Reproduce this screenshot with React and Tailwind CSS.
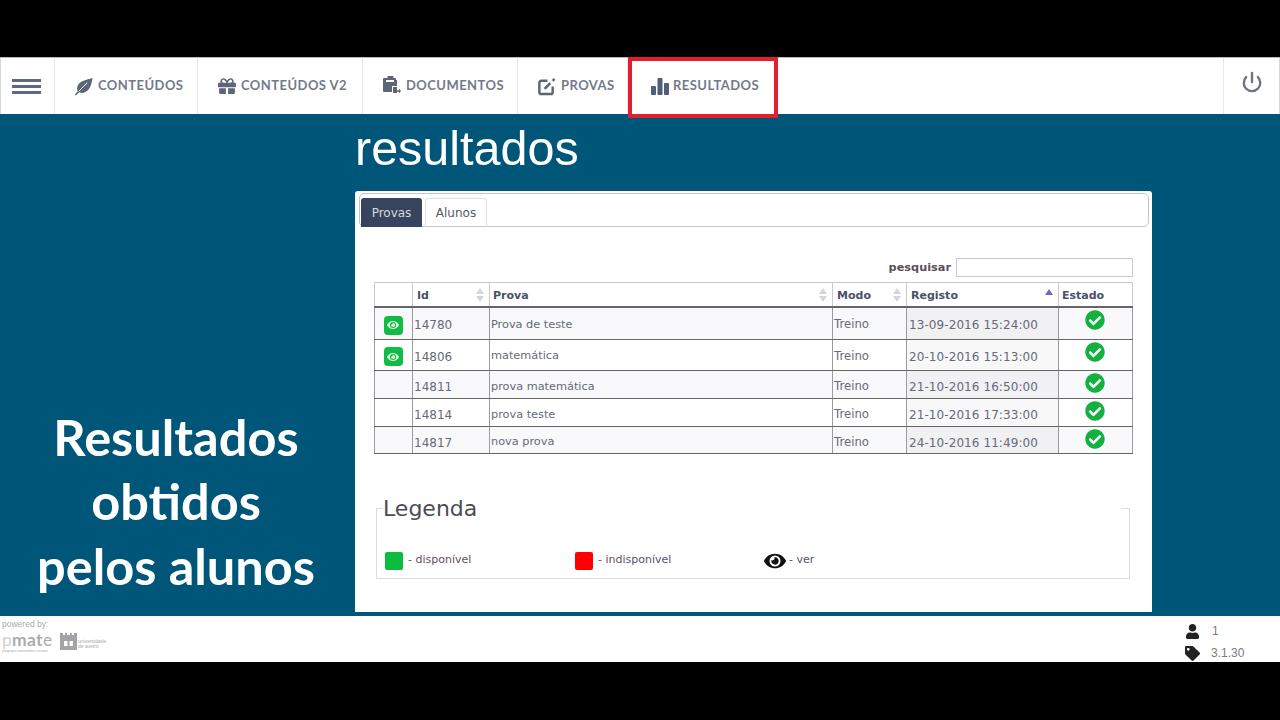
import React from "react";
import { FaGift, FaUser, FaTag, FaEye, FaCheckCircle } from "react-icons/fa";
import { Power } from "lucide-react";

function LeafIcon() {
  return (
    <svg width="19" height="19" viewBox="0 0 20 20">
      <path fill="#5d6678" d="M19.5 1c-1 7-3 13-8 15-2 1-4 1-6 0l-3.5 3.5-1.2-1.2L4 15c-1-2-1-4 0-6 2-5 9-6 15.5-8z" />
      <path d="M5 15L14 6" stroke="#fff" strokeWidth="1" />
    </svg>
  );
}

function EditIcon() {
  return (
    <svg width="19" height="19" viewBox="0 0 20 20" fill="none" stroke="#5d6678">
      <path d="M11 4H4.5a2 2 0 0 0-2 2v10a2 2 0 0 0 2 2h10a2 2 0 0 0 2-2v-6" strokeWidth="2.6" />
      <path d="M8 12.5L14 6.5" strokeWidth="2.8" />
      <path d="M16.5 4L18.5 2" strokeWidth="2.6" />
    </svg>
  );
}

function ClipIcon() {
  return (
    <svg width="18" height="20" viewBox="0 0 18 20" fill="#5d6678">
      <path d="M6 0h3a1 1 0 0 1 1 2h2a1 1 0 0 1 1 1v1h1v6h-5v6H1a1 1 0 0 1-1-1V3a1 1 0 0 1 1-1h4a1 1 0 0 1 1-2zM3 4v2h8V4z" fillRule="evenodd" />
      <rect x="10" y="11" width="4" height="6" />
      <path d="M11 14.2h5V12.5l2 2.5-2 2.5v-1.7h-5z" />
    </svg>
  );
}

function BarsIcon() {
  return (
    <svg width="18" height="18" viewBox="0 0 18 18" fill="#4f5f7a">
      <rect x="0" y="9" width="5" height="9" rx="1" />
      <rect x="6.5" y="1" width="5" height="17" rx="1" />
      <rect x="13" y="6" width="5" height="12" rx="1" />
    </svg>
  );
}

function NavItem({ w, icon, label }) {
  return (
    <div className={`${w} flex h-full items-center gap-[5px] border-r border-[#e6e8ee] pl-[19px]`}>
      <span className="flex w-[19px] justify-center">{icon}</span>
      <span className="text-[13px] font-bold tracking-[0.45px] text-[#737a8a]">{label}</span>
    </div>
  );
}

function SortArrows() {
  return (
    <svg width="8" height="14" viewBox="0 0 8 14" fill="#d4d6dc">
      <path d="M4 0l4 6H0z" />
      <path d="M4 14L0 8h8z" />
    </svg>
  );
}

function Th({ children, arrows, up, pl = "pl-[4px]" }) {
  return (
    <th className="border border-[#c9c9cf] border-b-[2px] border-b-[#666] p-0 text-left text-[11px] font-bold text-[#4a5068]">
      <div className={`flex h-[23px] items-center justify-between pr-[5px] ${pl}`}>
        <span className="pt-[3px]">{children}</span>
        {arrows && <SortArrows />}
        {up && (
          <span className="mb-[6px] block">
            <svg width="8" height="6" viewBox="0 0 8 6" fill="#6a6ac4" className="block">
              <path d="M4 0l4 6H0z" />
            </svg>
          </span>
        )}
      </div>
    </th>
  );
}

const rows = [
  { id: "14780", prova: "Prova de teste", data: "13-09-2016 15:24:00", h: "h-[32px]", eye: true, odd: true, pt: "pt-[4px]" },
  { id: "14806", prova: "matemática", data: "20-10-2016 15:13:00", h: "h-[31px]", eye: true, odd: false, pt: "pt-[4px]" },
  { id: "14811", prova: "prova matemática", data: "21-10-2016 16:50:00", h: "h-[28px]", eye: false, odd: true, pt: "pt-[6px]" },
  { id: "14814", prova: "prova teste", data: "21-10-2016 17:33:00", h: "h-[28px]", eye: false, odd: false, pt: "pt-[6px]" },
  { id: "14817", prova: "nova prova", data: "24-10-2016 11:49:00", h: "h-[27px]", eye: false, odd: true, pt: "pt-[6px]" },
];

const td = "border-x border-x-[#9a9aa0] border-y-[1.5px] border-y-[#666] p-0 align-middle";

export default function App() {
  return (
    <div className="flex h-[720px] w-[1280px] flex-col overflow-hidden bg-black pt-[57px] font-['Liberation_Sans',sans-serif]">
      <div className="flex h-[605px] flex-col">
        <nav className="flex h-[57px] shrink-0 items-center border-x border-x-[#d8d8d8] border-t border-t-[#bbb] bg-white font-['Lato',sans-serif]">
          <div className="flex h-full w-[54px] flex-col items-center justify-center gap-[3px] border-r border-[#e6e8ee] pr-[2px]">
            <span className="block h-[3px] w-[29px] bg-[#5d6a82]" />
            <span className="block h-[3px] w-[29px] bg-[#5d6a82]" />
            <span className="block h-[3px] w-[29px] bg-[#5d6a82]" />
          </div>
          <NavItem w="w-[143px]" icon={<LeafIcon />} label="CONTEÚDOS" />
          <NavItem w="w-[165px]" icon={<FaGift size={18} color="#5d6678" />} label="CONTEÚDOS V2" />
          <NavItem w="w-[155px]" icon={<ClipIcon />} label="DOCUMENTOS" />
          <NavItem w="w-[110px]" icon={<EditIcon />} label="PROVAS" />
          <div className="relative h-full w-[150px]">
            <div className="flex h-full items-center gap-[4px] pl-[23px]">
              <BarsIcon />
              <span className="text-[13px] font-bold tracking-[0.45px] text-[#737a8a]">RESULTADOS</span>
            </div>
            <span className="absolute -bottom-[4px] left-0 right-0 top-[-1px] border-[4px] border-[#e01f2f]" />
          </div>
          <div className="ml-auto flex h-full w-[56px] justify-center border-l border-[#e6e8ee] pt-[13px]">
            <Power size={22} color="#6e7482" strokeWidth={2.6} />
          </div>
        </nav>

        <main className="flex min-h-0 flex-1 bg-[#005679]">
          <div className="flex w-[355px] flex-col justify-end pb-[18px] pr-[3px] text-center font-['Lato',sans-serif] text-[50.5px] font-bold leading-[64.5px] text-white">
            <div>Resultados</div>
            <div>obtidos</div>
            <div>pelos alunos</div>
          </div>

          <div className="flex w-[797px] flex-col">
            <h1 className="h-[77px] pt-[4px] text-[48.5px] font-normal leading-[60px] text-white">resultados</h1>
            <section className="h-[421px] rounded-t-[3px] bg-white font-['DejaVu_Sans',sans-serif] text-[12px]">
              <div className="ml-[4px] mr-[3px] mt-[2px] flex h-[34px] items-end gap-[3px] rounded-[5px] border border-[#c6c6c6] pl-[1px]">
                <div className="-mb-px flex h-[29px] w-[61px] items-center justify-center rounded-t-[3px] bg-[#36455d] text-[#d5d9e0]">Provas</div>
                <div className="-mb-px flex h-[29px] w-[62px] items-center justify-center rounded-t-[3px] border border-b-0 border-[#e2e2e2] text-[#555a66]">Alunos</div>
              </div>

              <div className="mt-[31px] flex h-[19px] items-center justify-end gap-[5px] pr-[19px]">
                <label className="pt-[1px] text-[11.3px] font-bold text-[#5c5058]">pesquisar</label>
                <input aria-label="pesquisar" className="h-[19px] w-[177px] border border-[#c9c9c9] bg-white" />
              </div>

              <div className="ml-[19px] mt-[5px] w-[758px]">
                <table className="w-full table-fixed border-collapse text-[#666a78]">
                  <colgroup>
                    <col className="w-[38px]" />
                    <col className="w-[77px]" />
                    <col className="w-[343px]" />
                    <col className="w-[74px]" />
                    <col className="w-[152px]" />
                    <col className="w-[74px]" />
                  </colgroup>
                  <thead>
                    <tr>
                      <Th />
                      <Th arrows>Id</Th>
                      <Th arrows pl="pl-[3px]">Prova</Th>
                      <Th arrows>Modo</Th>
                      <Th up>Registo</Th>
                      <Th pl="pl-[3px]">Estado</Th>
                    </tr>
                  </thead>
                  <tbody>
                    {rows.map((r) => (
                      <tr key={r.id} className={`${r.h} ${r.odd ? "bg-[#f9f8fb]" : "bg-white"}`}>
                        <td className={`${td} pr-[1px] pt-[4px]`}>
                          {r.eye && (
                            <div className="flex justify-center">
                              <span className="flex h-[19px] w-[19px] items-center justify-center rounded-[4px] bg-[#12bb45]">
                                <FaEye size={12} color="#d8f2de" />
                              </span>
                            </div>
                          )}
                        </td>
                        <td className={`${td} pl-[1px] ${r.pt}`}>{r.id}</td>
                        <td className={`${td} pl-[1px] ${r.pt} text-[11.3px]`}>{r.prova}</td>
                        <td className={`${td} pl-[1px] ${r.pt} text-[11.7px]`}>Treino</td>
                        <td className={`${td} pl-[2px] ${r.pt} tracking-[0.08px] ${r.odd ? "bg-[#f1f0f3]" : "bg-[#f8f8f9]"}`}>{r.data}</td>
                        <td className={`${td} pr-[1px] pt-[2px] align-top`}>
                          <div className="flex justify-center">
                            <FaCheckCircle size={20} color="#12b03f" />
                          </div>
                        </td>
                      </tr>
                    ))}
                  </tbody>
                </table>
              </div>

              <fieldset className="ml-[21px] mt-[41px] h-[84px] w-[753px] border-[1.5px] border-[#dcdcdc] px-[8px]">
                <legend className="-ml-[2px] w-[738px] bg-white p-0 pt-[1px] text-[22px] leading-[26px] text-[#4d4b52]">Legenda</legend>
                <div className="mt-[28px] flex items-center text-[11px] text-[#5f5068]">
                  <div className="flex w-[190px] items-center gap-[5px]">
                    <span className="block h-[18px] w-[18px] rounded-[2px] bg-[#0bbd3f]" />
                    <span>- disponível</span>
                  </div>
                  <div className="flex w-[189px] items-center gap-[5px]">
                    <span className="block h-[18px] w-[18px] rounded-[2px] bg-[#ff0000]" />
                    <span>- indisponível</span>
                  </div>
                  <div className="flex items-center gap-[3px]">
                    <FaEye size={22} color="#111" />
                    <span>- ver</span>
                  </div>
                </div>
              </fieldset>
            </section>
          </div>
        </main>

        <footer className="flex h-[46px] shrink-0 items-stretch justify-between bg-white">
          <div className="pl-[2px] pt-[3px] text-[#a9abaf]">
            <div className="text-[8.5px] leading-[10px]">powered by:</div>
            <div className="mt-[2px] flex items-start gap-[8px]">
              <div className="w-[50px]">
                <div className="font-['Lato',sans-serif] text-[17.5px] font-bold leading-[18px] tracking-[0.3px]">
                  <span className="font-normal text-[#cfd0d3]">p</span>mat<span className="font-normal">e</span>
                </div>
                <div className="text-[3.5px] leading-[5px]">programa matemática ensino</div>
              </div>
              <svg width="17" height="17" viewBox="0 0 17 17" fill="#a2a4a8" className="mt-[2px]">
                <path d="M0 0h3v2h2V0h2v2h3V0h2v2h2V0h3v17H0zM4 8v5h3.5V8zM9.5 8v5H13V8z" fillRule="evenodd" />
              </svg>
              <div className="-ml-[7px] mt-[8px] text-[5px] leading-[5px]">
                <div>universidade</div>
                <div>de aveiro</div>
              </div>
            </div>
          </div>
          <div className="flex w-[95px] flex-col gap-[7px] pt-[8px] text-[12px] leading-[15px] text-[#777a80]">
            <div className="flex items-center gap-[12px]">
              <FaUser size={15} color="#222" />
              <span>1</span>
            </div>
            <div className="flex items-center gap-[11px]">
              <FaTag size={15} color="#222" />
              <span>3.1.30</span>
            </div>
          </div>
        </footer>
      </div>
    </div>
  );
}
